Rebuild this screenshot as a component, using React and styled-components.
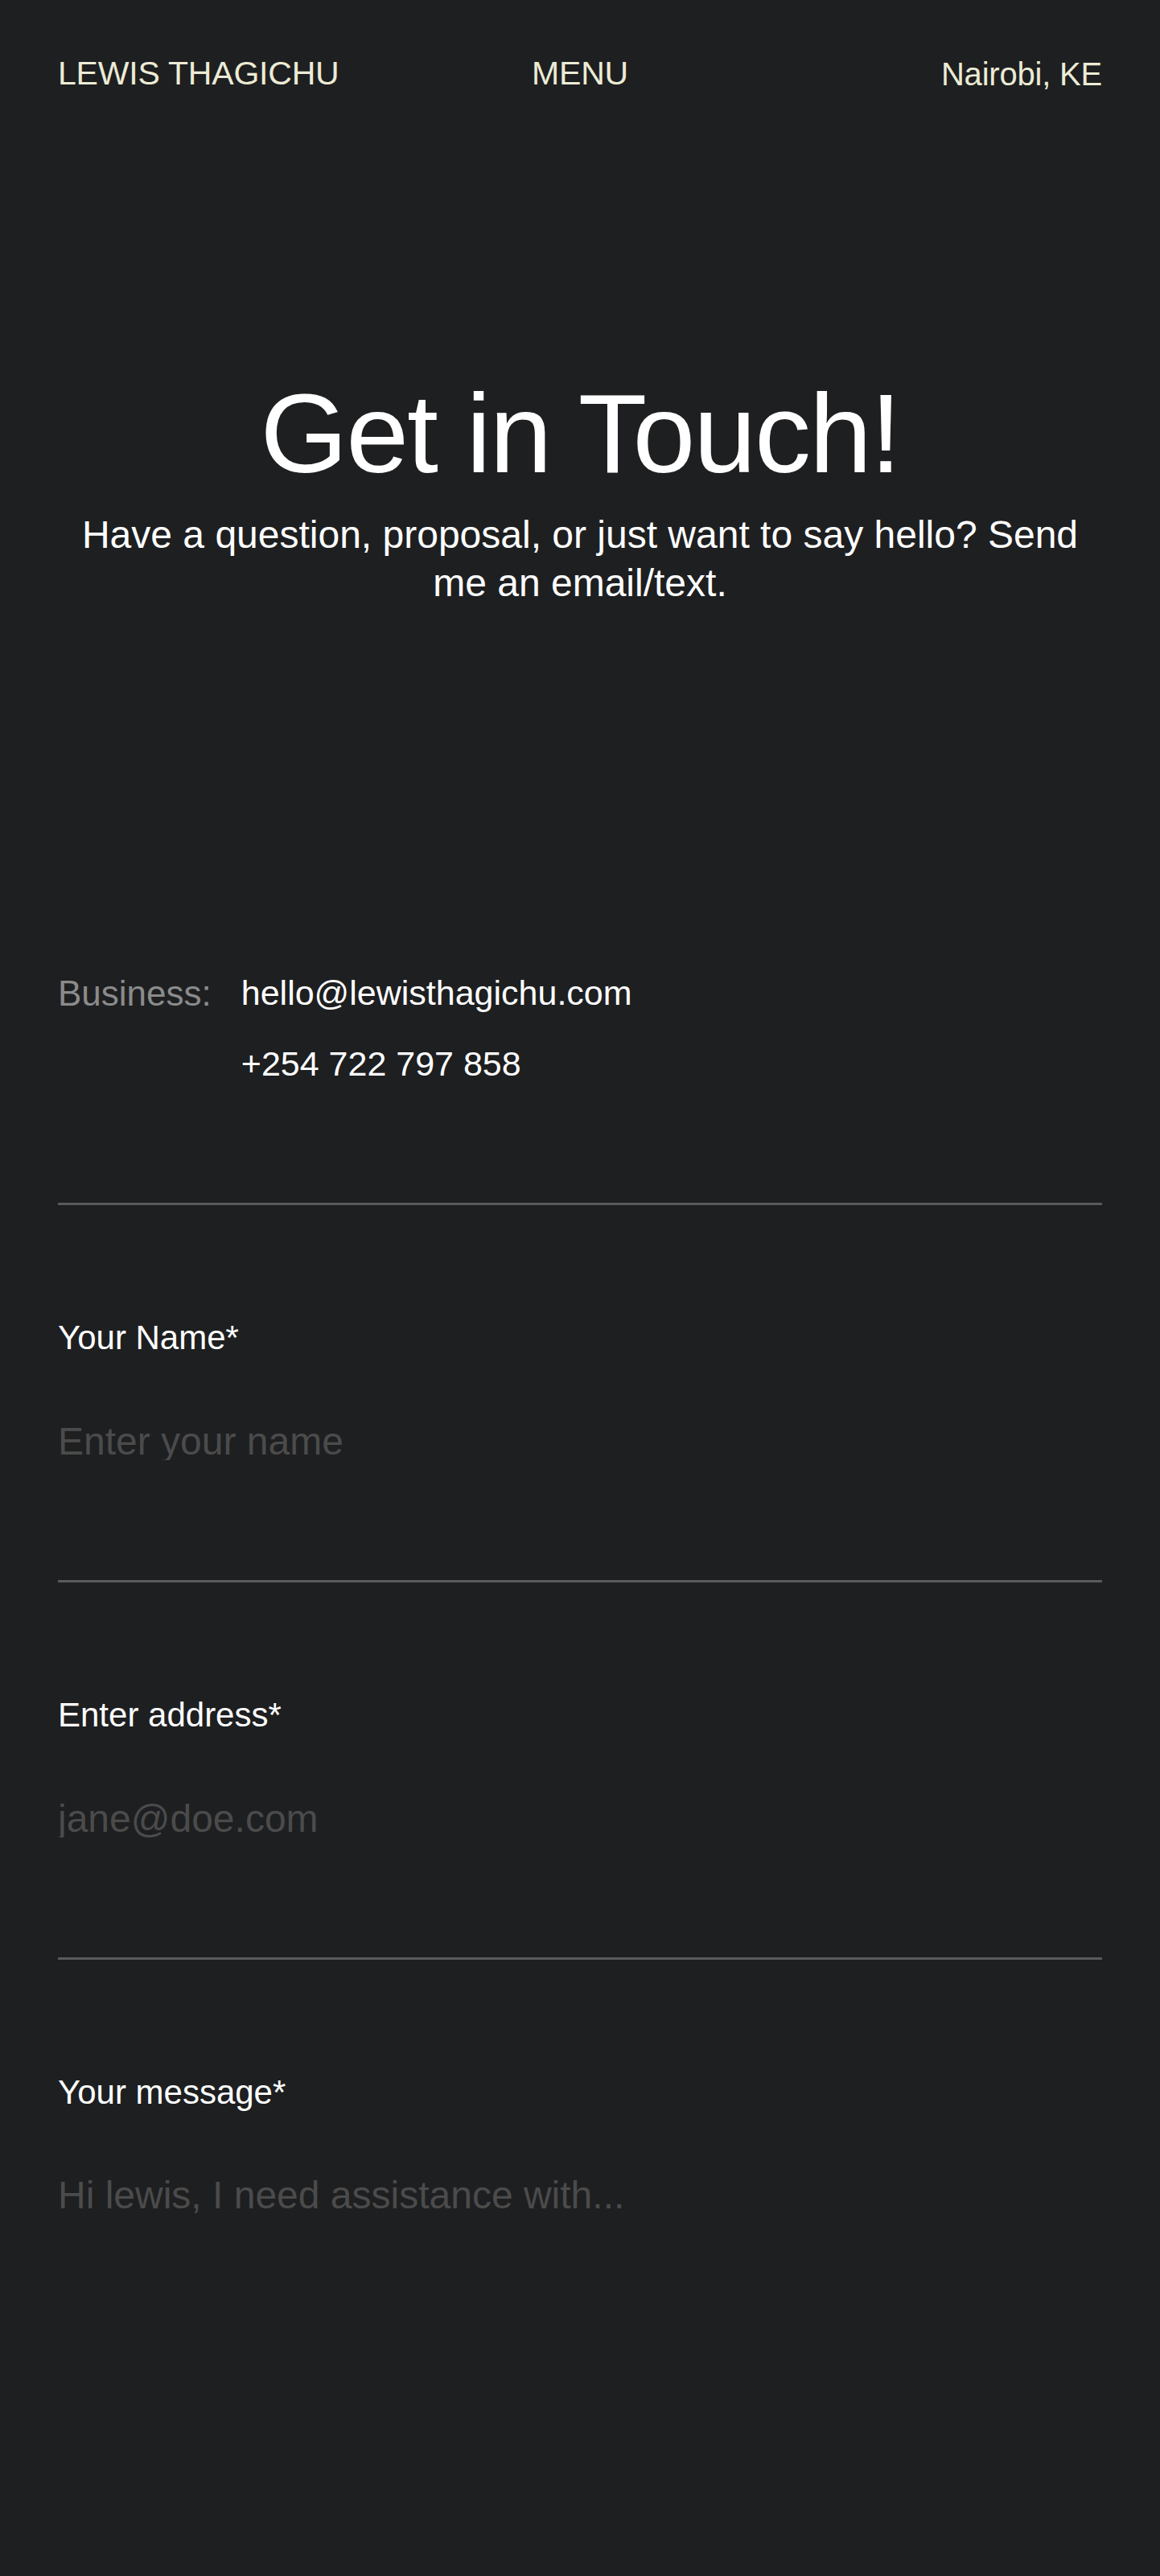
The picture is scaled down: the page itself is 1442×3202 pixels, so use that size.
import React from "react";
import styled, { createGlobalStyle } from "styled-components";

const GlobalStyle = createGlobalStyle`
  html, body {
    margin: 0;
    padding: 0;
    background: #1e1f21;
  }

  body {
    font-family: "Liberation Sans", Helvetica, Arial, sans-serif;
    color: #ffffff;
  }

  * {
    box-sizing: border-box;
  }
`;

const App = () => {
  return (
    <>
      <GlobalStyle />
      <Page>
        <Header>
          <Brand>LEWIS THAGICHU</Brand>
          <MenuButton>MENU</MenuButton>
          <Location>Nairobi, KE</Location>
        </Header>

        <Hero>
          <Title>Get in Touch!</Title>
          <Subtitle>
            Have a question, proposal, or just want to say hello? Send me an
            email/text.
          </Subtitle>
        </Hero>

        <Contact>
          <ContactLabel>Business:</ContactLabel>
          <ContactList>
            <ContactLink href="#">hello@lewisthagichu.com</ContactLink>
            <ContactLink href="#">+254 722 797 858</ContactLink>
          </ContactList>
        </Contact>

        <Form onSubmit={(e) => e.preventDefault()}>
          <Field>
            <Label htmlFor="name">Your Name*</Label>
            <Input id="name" type="text" placeholder="Enter your name" />
          </Field>
          <Field>
            <Label htmlFor="email">Enter address*</Label>
            <Input id="email" type="email" placeholder="jane@doe.com" />
          </Field>
          <Field $last>
            <Label htmlFor="message">Your message*</Label>
            <Message
              id="message"
              placeholder="Hi lewis, I need assistance with..."
            />
          </Field>
        </Form>
      </Page>
    </>
  );
};

export default App;

const Page = styled.div`
  padding: 0 72px;
`;

const Header = styled.header`
  display: grid;
  grid-template-columns: 1fr auto 1fr;
  align-items: center;
  padding-top: 71px;
  font-size: 41px;
  line-height: 1;
  letter-spacing: -0.005em;
  color: #ecebd5;
`;

const Brand = styled.a`
  justify-self: start;
`;

const MenuButton = styled.button`
  justify-self: center;
  background: none;
  border: none;
  padding: 0;
  font: inherit;
  letter-spacing: inherit;
  color: inherit;
  cursor: pointer;
`;

const Location = styled.span`
  justify-self: end;
  font-size: 40px;
`;

const Hero = styled.section`
  display: flex;
  flex-direction: column;
  align-items: center;
  padding-top: 357px;
  text-align: center;
`;

const Title = styled.h1`
  margin: 0;
  font-size: 140px;
  font-weight: 400;
  line-height: 1;
  letter-spacing: -0.015em;
`;

const Subtitle = styled.p`
  margin: 26px 0 0;
  max-width: 1275px;
  font-size: 48px;
  line-height: 60px;
`;

const Contact = styled.section`
  display: grid;
  grid-template-columns: auto 1fr;
  column-gap: 37px;
  align-items: start;
  margin-top: 458px;
  padding-bottom: 151px;
  border-bottom: 3px solid #5a5a5a;
  font-size: 43px;
  line-height: 1;
`;

const ContactLabel = styled.span`
  font-size: 44px;
  color: #8b8b8b;
`;

const ContactList = styled.div`
  display: flex;
  flex-direction: column;
  align-items: flex-start;
  gap: 45px;
`;

const ContactLink = styled.a`
  color: #ffffff;
  text-decoration: none;
`;

const Form = styled.form`
  display: flex;
  flex-direction: column;
  padding-bottom: 40px;
`;

const Field = styled.div`
  display: flex;
  flex-direction: column;
  padding-top: 144px;
  padding-bottom: ${({ $last }) => ($last ? "0" : "149px")};
  border-bottom: ${({ $last }) => ($last ? "none" : "3px solid #5a5a5a")};
`;

const Label = styled.label`
  font-size: 42px;
  line-height: 1;
  color: #ffffff;
  margin-bottom: 83px;
`;

const Input = styled.input`
  height: 48px;
  padding: 0;
  border: none;
  outline: none;
  background: transparent;
  font-family: inherit;
  font-size: 48px;
  line-height: 1;
  color: #ffffff;

  &::placeholder {
    color: #4b4b4b;
  }
`;

const Message = styled.textarea`
  height: 460px;
  padding: 0;
  border: none;
  outline: none;
  resize: none;
  background: transparent;
  font-family: inherit;
  font-size: 48px;
  line-height: 1;
  color: #ffffff;

  &::placeholder {
    color: #4b4b4b;
  }
`;
